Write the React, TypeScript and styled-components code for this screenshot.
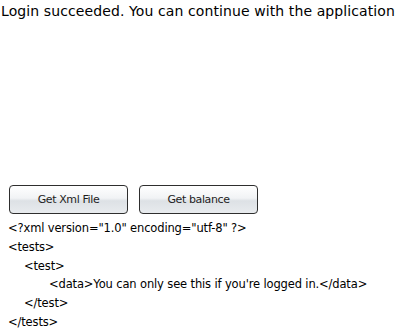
import React from "react";
import styled, { createGlobalStyle } from "styled-components";

const Global = createGlobalStyle`
  html, body { margin: 0; padding: 0; background: #fff; }
  body { font-family: "DejaVu Sans", sans-serif; color: #000; }
`;

const Page = styled.div`
  display: flex;
  flex-direction: column;
  width: 403px;
  height: 329px;
  overflow: hidden;
`;

const Title = styled.div`
  font-size: 14px;
  letter-spacing: 0.1px;
  line-height: 20px;
  padding: 1px 0 0 1px;
  white-space: nowrap;
`;

const Toolbar = styled.div`
  display: flex;
  gap: 11px;
  margin: 164px 0 0 9px;
`;

const Button = styled.button`
  width: 119px;
  height: 29px;
  border: 1px solid #2e2e2e;
  border-radius: 4px;
  background: linear-gradient(#ffffff 0%, #f1f3f5 45%, #dde1e5 55%, #e8ebee 100%);
  font-family: "DejaVu Sans", sans-serif;
  font-size: 11px;
  letter-spacing: -0.4px;
  color: #1e1e1e;
  padding: 0;
`;

const Xml = styled.div`
  display: flex;
  flex-direction: column;
  margin: 5px 0 0 8px;
  font-size: 11.5px;
  letter-spacing: -0.14px;
  line-height: 18.8px;
  white-space: pre;
`;

const indents = [0, 16, 41];

const Line = styled.div<{ $level: number }>`
  padding-left: ${(p) => indents[p.$level]}px;
`;

const lines: [number, string][] = [
  [0, '<?xml version="1.0" encoding="utf-8" ?>'],
  [0, "<tests>"],
  [1, "<test>"],
  [2, "<data>You can only see this if you're logged in.</data>"],
  [1, "</test>"],
  [0, "</tests>"],
];

export default function App() {
  return (
    <>
      <Global />
      <Page>
        <Title>Login succeeded. You can continue with the application</Title>
        <Toolbar>
          <Button>Get Xml File</Button>
          <Button>Get balance</Button>
        </Toolbar>
        <Xml>
          {lines.map(([lvl, t], i) => (
            <Line key={i} $level={lvl}>
              {t}
            </Line>
          ))}
        </Xml>
      </Page>
    </>
  );
}
